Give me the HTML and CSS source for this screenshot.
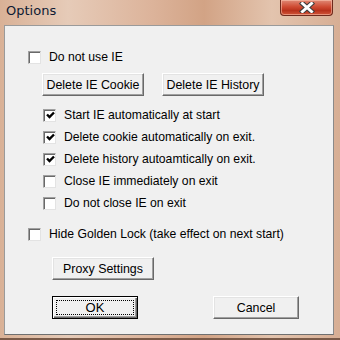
FILE: index.html
```html
<!DOCTYPE html>
<html lang="en">
<head>
    <meta charset="UTF-8">
    <title>Options</title>
    <link rel="stylesheet" href="styles.css">
</head>
<body>
  <div class="window">
    <div class="title-bar">
        <p class="title">Options</p>
        <div class="close-btn">
            <svg width="18" height="11" viewBox="0 0 18 11">
                <path d="M4.5 1.5 L13.5 9.5 M13.5 1.5 L4.5 9.5" stroke="#3c3c3c" stroke-width="5" stroke-linecap="square"/>
                <path d="M4.5 1.5 L13.5 9.5 M13.5 1.5 L4.5 9.5" stroke="#fff" stroke-width="3" stroke-linecap="square"/>
            </svg>
        </div>
    </div>
    <div class="client">
        <label class="check-row top-row">
            <span class="box"></span>
            <span>Do not use IE</span>
        </label>
        <div class="button-row">
            <button class="btn wide">Delete IE Cookie</button>
            <button class="btn wide">Delete IE History</button>
        </div>
        <div class="check-group">
            <label class="check-row">
                <span class="box"><svg width="9" height="9" viewBox="0 0 9 9"><path d="M1 3.5 L3.5 6 L8 1.5" fill="none" stroke="#000" stroke-width="2.4"/></svg></span>
                <span>Start IE automatically at start</span>
            </label>
            <label class="check-row">
                <span class="box"><svg width="9" height="9" viewBox="0 0 9 9"><path d="M1 3.5 L3.5 6 L8 1.5" fill="none" stroke="#000" stroke-width="2.4"/></svg></span>
                <span>Delete cookie automatically on exit.</span>
            </label>
            <label class="check-row">
                <span class="box"><svg width="9" height="9" viewBox="0 0 9 9"><path d="M1 3.5 L3.5 6 L8 1.5" fill="none" stroke="#000" stroke-width="2.4"/></svg></span>
                <span>Delete history autoamtically on exit.</span>
            </label>
            <label class="check-row">
                <span class="box"></span>
                <span>Close IE immediately on exit</span>
            </label>
            <label class="check-row">
                <span class="box"></span>
                <span>Do not close IE on exit</span>
            </label>
        </div>
        <label class="check-row hide-row">
            <span class="box"></span>
            <span>Hide Golden Lock (take effect on next start)</span>
        </label>
        <div class="proxy-row">
            <button class="btn wide">Proxy Settings</button>
        </div>
        <div class="footer">
            <button class="btn small default"><span class="focus">OK</span></button>
            <button class="btn small">Cancel</button>
        </div>
    </div>
  </div>
</body>
</html>
```

FILE: styles.css
```css
* {
  box-sizing: border-box;
}

body {
  margin: 0;
  font-family: "Liberation Sans", Arial, sans-serif;
  font-size: 12px;
  color: #000;
}

.window {
  width: 340px;
  height: 340px;
  background: linear-gradient(90deg, #d9b196 0%, #e6cbb8 20%, #dcb39a 45%, #d2a385 60%, #e3c4ae 80%, #d7ae94 100%);
  padding: 0 6px 0 4px;
  border-bottom: 2px solid #7a5a48;
}

.title-bar {
  height: 25px;
  display: flex;
  justify-content: space-between;
  align-items: flex-start;
}

.title {
  margin: 0;
  padding: 3px 0 0 2px;
  font-family: "DejaVu Sans", "Noto Sans", sans-serif;
  font-size: 13px;
  color: #0e1a33;
}

.close-btn {
  width: 53px;
  height: 16px;
  margin-right: 1px;
  border: 1px solid #6e2a1c;
  border-top: none;
  border-radius: 0 0 4px 4px;
  background: linear-gradient(#e08a76 0%, #cf4b33 45%, #b8321c 70%, #d0563a 100%);
  display: flex;
  justify-content: center;
  align-items: center;
  box-shadow: inset 0 0 0 1px rgba(255, 210, 190, 0.5);
}

.client {
  height: 310px;
  background-color: #f0f0f0;
  border: 1px solid;
  border-color: #9a9a9a #8a8a8a #6f6f6f #9a9a9a;
  padding: 20px 0 0 0;
}

.check-row {
  height: 22px;
  display: flex;
  align-items: center;
  gap: 8px;
  font-size: 12.2px;
}

.top-row,
.hide-row {
  padding-left: 23px;
}

.box {
  width: 13px;
  height: 13px;
  background-color: #fff;
  border: 1px solid;
  border-color: #a0a0a0 #e3e3e3 #e3e3e3 #a0a0a0;
  box-shadow: inset 1px 1px 0 #696969;
  display: flex;
  justify-content: center;
  align-items: center;
  padding: 1px 0 0 1px;
}

.button-row {
  display: flex;
  gap: 18px;
  margin: 5px 0 0 37px;
}

.btn {
  height: 23px;
  font-family: "Liberation Sans", Arial, sans-serif;
  font-size: 12.4px;
  color: #000;
  background-color: #f0f0f0;
  border: 1px solid;
  border-color: #fff #696969 #696969 #fff;
  box-shadow: inset -1px -1px 0 #a0a0a0, inset 1px 1px 0 #e3e3e3;
  border-radius: 0;
  padding: 0;
}

.wide {
  width: 102px;
}

.small {
  width: 86px;
}

.check-group {
  margin: 8px 0 0 38px;
}

.hide-row {
  margin-top: 9px;
}

.proxy-row {
  margin: 12px 0 0 47px;
}

.footer {
  display: flex;
  gap: 75px;
  margin: 16px 0 0 47px;
}

.default {
  border: 1px solid #000;
  box-shadow: inset 1px 1px 0 #fff, inset -1px -1px 0 #696969, inset -2px -2px 0 #a0a0a0;
  padding: 3px;
}

.focus {
  display: block;
  height: 100%;
  border: 1px dotted #000;
  line-height: 13px;
  font-size: 13px;
}
```
